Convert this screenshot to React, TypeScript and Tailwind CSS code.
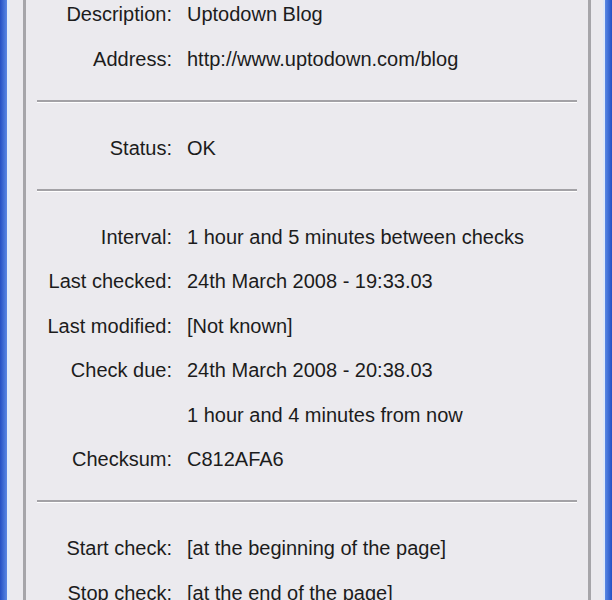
const groups: ([string, string] | null)[] = [
  ["Description:", "Uptodown Blog"],
  ["Address:", "http://www.uptodown.com/blog"],
  null,
  ["Status:", "OK"],
  null,
  ["Interval:", "1 hour and 5 minutes between checks"],
  ["Last checked:", "24th March 2008 - 19:33.03"],
  ["Last modified:", "[Not known]"],
  ["Check due:", "24th March 2008 - 20:38.03"],
  ["", "1 hour and 4 minutes from now"],
  ["Checksum:", "C812AFA6"],
  null,
  ["Start check:", "[at the beginning of the page]"],
  ["Stop check:", "[at the end of the page]"],
];

export default function App() {
  return (
    <div className="flex h-[600px] w-[612px] overflow-hidden bg-[#ebeaee] text-[#1c1c1c] font-['Liberation_Sans',Arial,sans-serif]">
      <div className="w-[7px] bg-gradient-to-r from-[#2450c4] to-[#5a88e4]" />
      <div className="w-[3px] bg-[#e4ecf8]" />
      <div className="w-[13px]" />
      <div className="w-[3px] bg-[#a6a5a9]" />

      <div className="flex-1 -mt-[8px] pl-[11px] pr-[11px]">
        {groups.map((row, i) =>
          row ? (
            <div key={i} className="flex h-[44.5px] items-center text-[20px]">
              <div className="w-[135px] shrink-0 text-right">{row[0]}</div>
              <div className="pl-[15px] whitespace-nowrap">{row[1]}</div>
            </div>
          ) : (
            <div key={i} className="flex h-[44.5px] items-center">
              <div className="-mt-[4px] w-full border-t-2 border-b border-t-[#a3a2a6] border-b-white" />
            </div>
          )
        )}
      </div>

      <div className="w-[3px] bg-[#a6a5a9]" />
      <div className="w-[12px]" />
      <div className="w-[2px] bg-[#dfe8f8]" />
      <div className="w-[7px] bg-gradient-to-r from-[#5a88e4] to-[#2450c4]" />
    </div>
  );
}
